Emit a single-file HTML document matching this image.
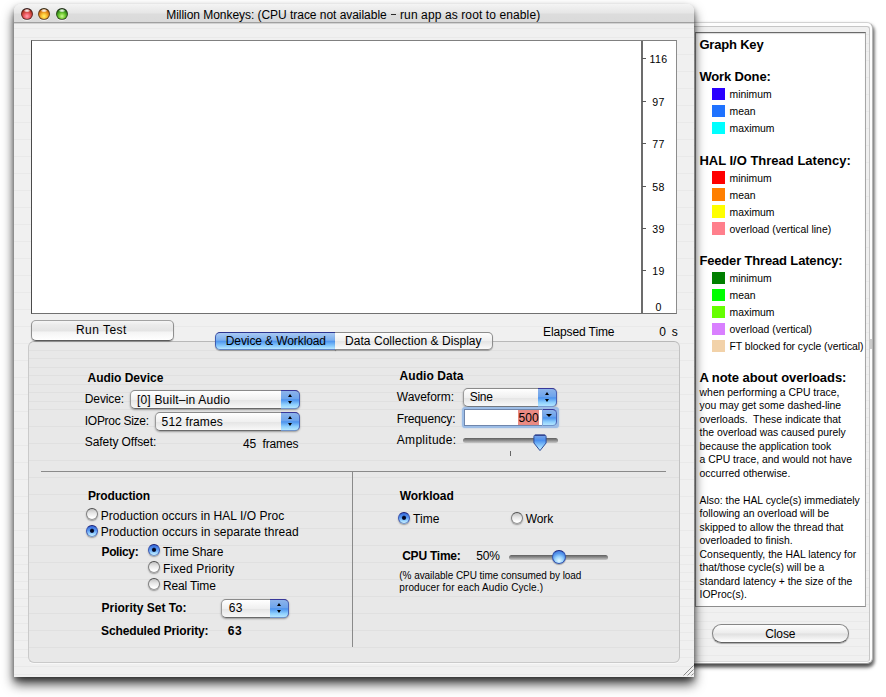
<!DOCTYPE html>
<html><head><meta charset="utf-8">
<style>
*{box-sizing:border-box;margin:0;padding:0}
html,body{width:886px;height:697px;background:#fff;overflow:hidden}
body{position:relative;font-family:"Liberation Sans",sans-serif;color:#000;font-size:12px}
.abs{position:absolute}
.t{position:absolute;white-space:nowrap;line-height:1}
.b{font-weight:bold}
#drawer{left:686px;top:22px;width:187px;height:642px;border-radius:6px;background:#fdfdfd;border:1px solid #d2d2d2;border-right-color:#b4b4b4;border-bottom-color:#9a9a9a;
 box-shadow:0 3px 4px rgba(0,0,0,.6),2px 3px 3px rgba(0,0,0,.3)}
#drawerin{left:686px;top:26px;width:184px;height:636px;border-radius:3px;border:1px solid #c6c6c6;border-bottom-color:#dcdcdc;
 background:repeating-linear-gradient(180deg,#f0f0f0 0,#f0f0f0 7.5px,#e9e9e9 7.5px,#e9e9e9 8.5px)}
#dtext{left:695px;top:32px;width:171px;height:575px;background:#fff;border:1px solid #8d8d8d;border-top-color:#6a6a6a;border-left-color:#8c8c8c;border-right-color:#a6a6a6;box-shadow:inset 0 1px 1px rgba(0,0,0,.15)}
#win{left:14px;top:4px;width:680px;height:673px;border-radius:7px 7px 0 0;
 background:repeating-linear-gradient(180deg,#f0f0f0 0,#f0f0f0 7.5px,#e9e9e9 7.5px,#e9e9e9 8.5px);
 box-shadow:0 7px 12px rgba(0,0,0,.75),0 3px 5px rgba(0,0,0,.35)}
#title{left:14px;top:4px;width:680px;height:19px;border-radius:7px 7px 0 0;
 background:linear-gradient(180deg,#f4f4f4 0,#ededed 25%,#e6e6e6 48%,#dcdcdc 58%,#dadada 100%);border-bottom:1px solid #a0a0a0;box-shadow:0 1px 0 rgba(0,0,0,.12)}
.tl{position:absolute;width:12px;height:12px;border-radius:50%;top:8px;border:1px solid rgba(40,30,30,.6);border-top-color:rgba(20,20,20,.85);box-shadow:0 1px 0 rgba(255,255,255,.6)}
#graph{left:31px;top:40px;width:646px;height:274px;background:#fff;border:1px solid #4a4a4a;border-right-color:#8c8c8c;border-top-color:#808080;border-bottom-color:#707070}
#group{left:28px;top:341px;width:652px;height:322px;border-radius:6px;border:1px solid #cacaca;border-top-color:#b8b8b8;border-right-color:#c2c2c2;
 background:repeating-linear-gradient(180deg,#e8e8e8 0,#e8e8e8 7.5px,#e0e0e0 7.5px,#e0e0e0 8.5px);box-shadow:0 1px 0 #f8f8f8}
.sw{position:absolute;left:712.3px;width:12.8px;height:12.6px;margin-top:-.4px}
.k{position:absolute;left:729.5px;margin-top:1.2px;font-size:10.4px;white-space:nowrap;line-height:1}
.n{position:absolute;left:699.6px;margin-top:1px;font-size:10.4px;white-space:nowrap;line-height:1}
.ax{position:absolute;font-size:10.6px;white-space:nowrap;line-height:1;text-align:center;width:30px;left:643.6px;margin-top:-.5px;letter-spacing:.35px}
.tick{position:absolute;left:642px;width:3.8px;height:1px;background:#585858}
.pop{position:absolute;height:18.6px;border-radius:5px;border:1px solid #9a9a9a;border-top-color:#8a8a8a;border-bottom-color:#6a6a6a;background:linear-gradient(180deg,#ffffff 0,#f0f0f0 50%,#e4e4e4 51%,#f8f8f8 100%);box-shadow:0 1px 2px rgba(0,0,0,.35)}
.pop i{position:absolute;right:-1px;top:-1px;width:19px;height:18.6px;border-radius:0 5px 5px 0;border:1px solid #4a62b4;border-top-color:#38389a;border-bottom-color:#6f93c9;border-left:0;
 background:linear-gradient(180deg,#8db4ea 0,#6da4ec 45%,#4c93ee 52%,#8fd0fd 80%,#b4e6ff 100%)}
.pop i:before{content:"";position:absolute;left:6.5px;top:3px;border:2.5px solid transparent;border-bottom:3.2px solid #000;border-top:0}
.pop i:after{content:"";position:absolute;left:6.5px;top:9.8px;border:2.5px solid transparent;border-top:3.2px solid #000;border-bottom:0}
.radio{position:absolute;width:12.4px;height:12.4px;border-radius:50%;border:1px solid #7e7e7e;border-top-color:#4e4e4e;border-bottom-color:#9a9a9a;background:linear-gradient(180deg,#c2c2c2 0,#e6e6e6 40%,#ffffff 85%);box-shadow:0 1px 1.5px rgba(0,0,0,.35)}
.radio.on{border-color:#3a55b0;border-top-color:#161e78;border-bottom-color:#6f93c9;background:radial-gradient(circle at 50% 48%,#000 0,#05103a 1.6px,rgba(10,30,90,0) 2.6px),linear-gradient(180deg,#3567d8 0,#5a9af2 45%,#9fd8ff 80%,#d2f2ff 100%)}
</style></head><body>

<div id="drawer" class="abs"></div>
<div id="drawerin" class="abs"></div>
<div id="dtext" class="abs"></div>
<div class="abs" style="left:870px;top:339px;width:2.4px;height:10px;background:#cbcbcb"></div>
<div id="win" class="abs"></div>
<div id="title" class="abs"></div>
<div class="tl" style="left:20.6px;background:radial-gradient(ellipse 3.4px 1.8px at 50% 16%,rgba(255,255,255,.95) 0,rgba(255,255,255,.6) 60%,rgba(255,255,255,0) 100%),radial-gradient(circle at 50% 72%,#ffa4b0 0,#f2626c 30%,#bc3a2a 62%,#5e160a 100%)"></div>
<div class="tl" style="left:38.4px;background:radial-gradient(ellipse 3.4px 1.8px at 50% 16%,rgba(255,255,255,.95) 0,rgba(255,255,255,.6) 60%,rgba(255,255,255,0) 100%),radial-gradient(circle at 50% 72%,#fff26a 0,#fbc034 30%,#d87a14 62%,#623404 100%)"></div>
<div class="tl" style="left:56.2px;background:radial-gradient(ellipse 3.4px 1.8px at 50% 16%,rgba(255,255,255,.95) 0,rgba(255,255,255,.6) 60%,rgba(255,255,255,0) 100%),radial-gradient(circle at 50% 72%,#ccfa94 0,#7ed43c 30%,#36921a 62%,#103c08 100%)"></div>

<div class="abs" style="left:391px;top:14.3px;width:5.2px;height:1.1px;background:#2a2a2a"></div>
<div id="graph" class="abs"></div>
<div class="abs" style="left:641px;top:41px;width:1.8px;height:272px;background:#6c6c6c"></div>
<div class="tick" style="top:58px"></div><div class="ax" style="top:54px">116</div>
<div class="tick" style="top:101px"></div><div class="ax" style="top:97px">97</div>
<div class="tick" style="top:143px"></div><div class="ax" style="top:139px">77</div>
<div class="tick" style="top:186px"></div><div class="ax" style="top:182px">58</div>
<div class="tick" style="top:228px"></div><div class="ax" style="top:224px">39</div>
<div class="tick" style="top:270px"></div><div class="ax" style="top:266px">19</div>
<div class="ax" style="top:302px">0</div>

<div id="group" class="abs"></div>

<!-- Run Test button -->
<div class="abs" style="left:31px;top:320px;width:143px;height:21px;border-radius:5px;border:1px solid #8f8f8f;border-top-color:#a2a2a2;border-bottom-color:#5a5a5a;background:linear-gradient(180deg,#f6f6f6 0,#ebebeb 20%,#e4e4e4 52%,#f4f4f4 58%,#ffffff 100%);box-shadow:0 1px 1px rgba(0,0,0,.25)"></div>

<!-- Tabs -->
<div class="abs" style="left:215px;top:332px;width:121px;height:18px;border-radius:5px 0 0 5px;border:1px solid #3f5cb0;border-top-color:#2c3590;border-bottom-color:#5f83c4;background:linear-gradient(180deg,#a9c9f2 0,#7aaeee 45%,#4f96ee 52%,#86c8fc 80%,#b8e6ff 100%);box-shadow:0 1px 1px rgba(0,0,0,.35)"></div>
<div class="abs" style="left:335px;top:332px;width:158px;height:18px;border-radius:0 5px 5px 0;border:1px solid #8c8c8c;border-left:0;background:linear-gradient(180deg,#fdfdfd 0,#efefef 48%,#e4e4e4 52%,#fafafa 100%);box-shadow:0 1px 1px rgba(0,0,0,.3)"></div>

<!-- Audio Device -->
<div class="pop" style="left:130px;top:390px;width:170px"><i></i></div>
<div class="pop" style="left:155px;top:412px;width:145px"><i></i></div>

<!-- Audio Data -->
<div class="pop" style="left:463px;top:388px;width:94px"><i></i></div>
<div class="abs" style="left:462px;top:406.5px;width:96.5px;height:21px;border-radius:3.5px;background:#9dbde6;box-shadow:0 0 1.5px #9dbde6"></div>
<div class="abs" style="left:464px;top:409px;width:78px;height:16.5px;background:#fff;border:1px solid #6f86ac;border-right:0"></div>
<div class="abs" style="left:518px;top:410px;width:21px;height:14.5px;background:#e98a83"></div>
<div class="abs" style="left:542px;top:408.5px;width:15px;height:17.5px;border:1px solid #4a62b4;border-top-color:#38389a;border-bottom-color:#6f93c9;border-left-color:#7fa6dc;border-radius:0 4.5px 4.5px 0;background:linear-gradient(180deg,#8db4ea 0,#6da4ec 42%,#4c93ee 52%,#8fd0fd 80%,#b4e6ff 100%)"></div>
<div class="abs" style="left:546px;top:414.3px;border:3px solid transparent;border-top:3.8px solid #000;border-bottom:0"></div>
<div class="abs" style="left:463px;top:438px;width:94.5px;height:5px;border-radius:2.5px;background:linear-gradient(180deg,#5e5e5e 0,#8a8a8a 45%,#c8c8c8 100%)"></div>
<div class="abs" style="left:510px;top:451px;width:1px;height:4.5px;background:#666"></div>
<svg class="abs" style="left:533px;top:434px" width="15" height="18" viewBox="0 0 15 18"><defs><linearGradient id="kg" x1="0" y1="0" x2="0" y2="1"><stop offset="0" stop-color="#7da6e6"/><stop offset=".35" stop-color="#4a8fee"/><stop offset=".7" stop-color="#8fcdfd"/><stop offset="1" stop-color="#d0f0ff"/></linearGradient></defs><path d="M2.5,1h9a1.6,1.6 0 0 1 1.6,1.6v6.4l-6.1,7.6 -6.1,-7.6v-6.4a1.6,1.6 0 0 1 1.6,-1.6z" fill="url(#kg)" stroke="#2f4c98" stroke-width="1"/><path d="M2,1.2h10" stroke="#26307e" stroke-width="1"/></svg>

<!-- separators -->
<div class="abs" style="left:41px;top:471px;width:625px;height:1px;background:#8a8a8a"></div>
<div class="abs" style="left:352px;top:472px;width:1px;height:175px;background:#8a8a8a"></div>

<!-- Production -->
<div class="radio" style="left:86px;top:508px"></div>
<div class="radio on" style="left:86px;top:525px"></div>
<div class="radio on" style="left:148px;top:544px"></div>
<div class="radio" style="left:148px;top:561px"></div>
<div class="radio" style="left:148px;top:578px"></div>
<div class="pop" style="left:221px;top:599px;width:68px"><i></i></div>

<!-- Workload -->
<div class="radio on" style="left:397.6px;top:511.5px"></div>
<div class="radio" style="left:510.6px;top:511.5px"></div>
<div class="abs" style="left:509px;top:555px;width:99px;height:4.5px;border-radius:2.5px;background:linear-gradient(180deg,#5e5e5e 0,#8a8a8a 45%,#c8c8c8 100%)"></div>
<div class="abs" style="left:552.2px;top:550px;width:13.8px;height:13.8px;border-radius:50%;border:1px solid #3456b0;border-top-color:#1d2c86;background:radial-gradient(circle at 50% 80%,#e4f8ff 0,#9ad2fc 35%,#5496ec 65%,#3c70d6 100%);box-shadow:0 1px 1px rgba(0,0,0,.3)"></div>

<!-- resize grip -->
<svg class="abs" style="left:683px;top:665px" width="11" height="11"><path d="M10.5,.5L.5,10.5M10.5,4.5L4.5,10.5M10.5,8.5L8.5,10.5" stroke="#8a8a8a" stroke-width="1"/></svg>

<div class="abs" style="left:712px;top:624.2px;width:137px;height:18.4px;border-radius:9.2px;border:1px solid #868686;border-bottom-color:#626262;background:linear-gradient(180deg,#fdfdfd 0,#ececec 48%,#e0e0e0 52%,#ffffff 100%);box-shadow:0 1px 1px rgba(0,0,0,.3)"></div>
<div class="t" style="left:166.2px;top:8.7px;font-size:12px;letter-spacing:-0.04px">Million Monkeys: (CPU trace not available</div>
<div class="t" style="left:400.0px;top:8.7px;font-size:12px;letter-spacing:0.11px">run app as root to enable)</div>
<div class="t" style="left:76.0px;top:324px;font-size:12px;letter-spacing:0.45px">Run Test</div>
<div class="t" style="left:225.8px;top:335px;font-size:12px;letter-spacing:-0.10px">Device &amp; Workload</div>
<div class="t" style="left:345.0px;top:335px;font-size:12px;letter-spacing:0.05px">Data Collection &amp; Display</div>
<div class="t" style="left:543.0px;top:326px;font-size:12px;letter-spacing:-0.11px">Elapsed Time</div>
<div class="t" style="left:659.3px;top:326px;font-size:12px;letter-spacing:-0.26px">0&nbsp; s</div>
<div class="t b" style="left:87.5px;top:372px;font-size:12px;letter-spacing:-0.02px">Audio Device</div>
<div class="t" style="left:84.8px;top:393px;font-size:12px;letter-spacing:-0.12px">Device:</div>
<div class="t" style="left:136.9px;top:394px;font-size:12px;letter-spacing:0.21px">[0] Built–in Audio</div>
<div class="t" style="left:84.8px;top:415px;font-size:12px;letter-spacing:-0.29px">IOProc Size:</div>
<div class="t" style="left:161.6px;top:416px;font-size:12px;letter-spacing:0.13px">512 frames</div>
<div class="t" style="left:84.8px;top:436px;font-size:12px;letter-spacing:-0.08px">Safety Offset:</div>
<div class="t" style="left:242.9px;top:438px;font-size:12px;letter-spacing:-0.12px">45&nbsp; frames</div>
<div class="t b" style="left:399.6px;top:369.9px;font-size:12px;letter-spacing:0.06px">Audio Data</div>
<div class="t" style="left:396.8px;top:391px;font-size:12px;letter-spacing:-0.04px">Waveform:</div>
<div class="t" style="left:396.8px;top:413px;font-size:12px;letter-spacing:-0.15px">Frequency:</div>
<div class="t" style="left:396.8px;top:434px;font-size:12px;letter-spacing:0.29px">Amplitude:</div>
<div class="t" style="left:469.7px;top:391px;font-size:12px;letter-spacing:-0.26px">Sine</div>
<div class="t" style="left:518.4px;top:412px;font-size:12px;letter-spacing:0.16px">500</div>
<div class="t b" style="left:87.9px;top:490px;font-size:12px;letter-spacing:-0.14px">Production</div>
<div class="t" style="left:100.7px;top:509.6px;font-size:12px;letter-spacing:0.04px">Production occurs in HAL I/O Proc</div>
<div class="t" style="left:100.7px;top:526.3px;font-size:12px;letter-spacing:0.05px">Production occurs in separate thread</div>
<div class="t b" style="left:101.5px;top:546px;font-size:12px;letter-spacing:-0.37px">Policy:</div>
<div class="t" style="left:163.0px;top:546px;font-size:12px;letter-spacing:-0.14px">Time Share</div>
<div class="t" style="left:163.0px;top:563px;font-size:12px;letter-spacing:0.10px">Fixed Priority</div>
<div class="t" style="left:163.0px;top:580px;font-size:12px;letter-spacing:-0.14px">Real Time</div>
<div class="t b" style="left:101.5px;top:602px;font-size:12px;letter-spacing:-0.01px">Priority Set To:</div>
<div class="t" style="left:228.7px;top:602px;font-size:12px;letter-spacing:0.42px">63</div>
<div class="t b" style="left:101.1px;top:625px;font-size:12px;letter-spacing:-0.14px">Scheduled Priority:</div>
<div class="t b" style="left:227.8px;top:625px;font-size:12px;letter-spacing:0.45px">63</div>
<div class="t b" style="left:399.7px;top:490px;font-size:12px;letter-spacing:-0.06px">Workload</div>
<div class="t" style="left:413.0px;top:513px;font-size:12px;letter-spacing:0.09px">Time</div>
<div class="t" style="left:525.7px;top:513px;font-size:12px;letter-spacing:-0.05px">Work</div>
<div class="t b" style="left:402.2px;top:550px;font-size:12px;letter-spacing:-0.23px">CPU Time:</div>
<div class="t" style="left:476.2px;top:550px;font-size:12px;letter-spacing:-0.11px">50%</div>
<div class="t" style="left:399.3px;top:571px;font-size:10px;letter-spacing:-0.05px">(% available CPU time consumed by load</div>
<div class="t" style="left:399.3px;top:583px;font-size:10px;letter-spacing:0.12px">producer for each Audio Cycle.)</div>
<div class="t" style="left:765.2px;top:627.6px;font-size:12px;letter-spacing:-0.08px">Close</div>
<div class="t b" style="left:699.4px;top:38px;font-size:13px;letter-spacing:-0.19px">Graph Key</div>
<div class="t b" style="left:699.4px;top:70px;font-size:13px;letter-spacing:-0.14px">Work Done:</div>
<div class="t b" style="left:699.4px;top:153.6px;font-size:13px;letter-spacing:-0.00px">HAL I/O Thread Latency:</div>
<div class="t b" style="left:699.4px;top:254px;font-size:13px;letter-spacing:-0.16px">Feeder Thread Latency:</div>
<div class="t b" style="left:699.4px;top:371px;font-size:13px;letter-spacing:-0.06px">A note about overloads:</div>

<!-- Drawer contents -->
<div class="sw" style="top:88px;background:#2a00ff"></div><div class="k" style="top:89px">minimum</div>
<div class="sw" style="top:105px;background:#1f72ff"></div><div class="k" style="top:106px">mean</div>
<div class="sw" style="top:122px;background:#00ffff"></div><div class="k" style="top:123px">maximum</div>
<div class="sw" style="top:171.6px;background:#ff0000"></div><div class="k" style="top:172.5px">minimum</div>
<div class="sw" style="top:188.6px;background:#ff7f00"></div><div class="k" style="top:189.5px">mean</div>
<div class="sw" style="top:205.6px;background:#ffff00"></div><div class="k" style="top:206.5px">maximum</div>
<div class="sw" style="top:222.6px;background:#ff7f8c"></div><div class="k" style="top:223.5px">overload (vertical line)</div>
<div class="sw" style="top:272px;background:#007f00"></div><div class="k" style="top:273px">minimum</div>
<div class="sw" style="top:289px;background:#00ff00"></div><div class="k" style="top:290px">mean</div>
<div class="sw" style="top:306px;background:#66ff00"></div><div class="k" style="top:307px">maximum</div>
<div class="sw" style="top:323px;background:#d97fff"></div><div class="k" style="top:324px">overload (vertical)</div>
<div class="sw" style="top:340px;background:#f2d2a9"></div><div class="k" style="top:341px;letter-spacing:-.05px">FT blocked for cycle (vertical)</div>
<div class="n" style="top:387px">when performing a CPU trace,</div>
<div class="n" style="top:400px">you may get some dashed-line</div>
<div class="n" style="top:414px">overloads.&nbsp; These indicate that</div>
<div class="n" style="top:427px">the overload was caused purely</div>
<div class="n" style="top:441px">because the application took</div>
<div class="n" style="top:454px">a CPU trace, and would not have</div>
<div class="n" style="top:468px">occurred otherwise.</div>
<div class="n" style="top:495px">Also: the HAL cycle(s) immediately</div>
<div class="n" style="top:508px">following an overload will be</div>
<div class="n" style="top:522px">skipped to allow the thread that</div>
<div class="n" style="top:535px">overloaded to finish.</div>
<div class="n" style="top:549px">Consequently, the HAL latency for</div>
<div class="n" style="top:562px">that/those cycle(s) will be a</div>
<div class="n" style="top:576px">standard latency + the size of the</div>
<div class="n" style="top:589px">IOProc(s).</div>
</body></html>
